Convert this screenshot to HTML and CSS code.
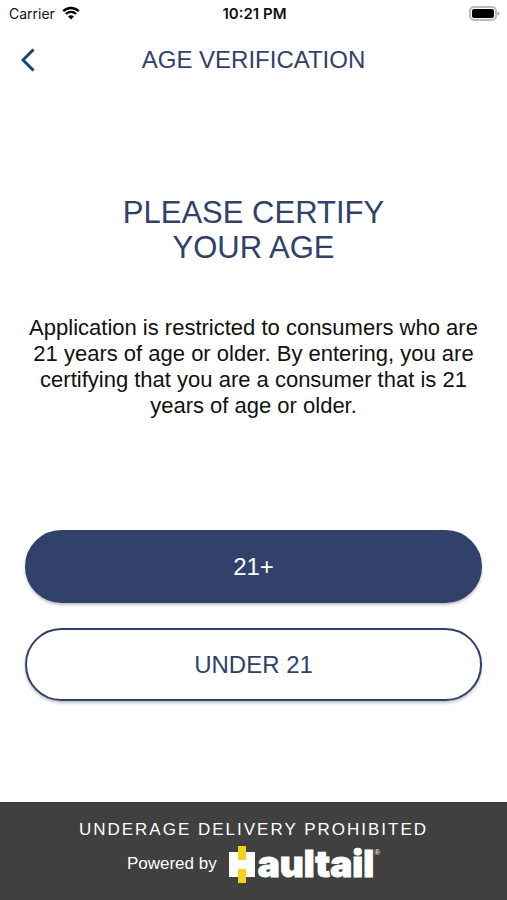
FILE: index.html
```html
<!DOCTYPE html>
<html lang="en">
<head>
  <meta charset="utf-8">
  <meta name="viewport" content="width=device-width, initial-scale=1">
  <title>Age Verification</title>
  <link rel="stylesheet" href="styles.css">
</head>
<body>
  <div class="status-bar">
    <div class="carrier">
      <span>Carrier</span>
      <svg class="wifi" viewBox="0 0 18 14" aria-hidden="true">
        <path d="M1.2 5.1a11.2 11.2 0 0 1 15.6 0" />
        <path d="M3.9 8a7.3 7.3 0 0 1 10.2 0" />
        <path class="wifi-dot" d="M9 13.6 6 10.6a4.3 4.3 0 0 1 6 0z" />
      </svg>
    </div>
    <time class="clock">10:21 PM</time>
    <svg class="battery" viewBox="0 0 31 15" aria-hidden="true">
      <rect class="battery-case" x="1" y="1" width="26" height="13" rx="4" />
      <rect x="3" y="3" width="22" height="9" rx="2" />
      <path class="battery-tip" d="M28.5 5.2q2 .8 2 2.3t-2 2.3z" />
    </svg>
  </div>

  <header class="nav-bar">
    <button class="back" type="button" aria-label="Back">
      <svg viewBox="0 0 14 24" aria-hidden="true"><path d="M12.5 1.5 2 12l10.5 10.5" /></svg>
    </button>
    <h1 class="nav-title">AGE VERIFICATION</h1>
  </header>

  <main class="content">
    <h2 class="heading">PLEASE CERTIFY<br>YOUR AGE</h2>
    <p class="notice">Application is restricted to consumers who are 21 years of age or older. By entering, you are certifying that you are a consumer that is 21 years of age or older.</p>
    <div class="actions">
      <button class="button button-primary" type="button">21+</button>
      <button class="button button-outline" type="button">UNDER 21</button>
    </div>
  </main>

  <footer class="footer">
    <p class="warning">UNDERAGE DELIVERY PROHIBITED</p>
    <div class="powered">
      <span>Powered by</span>
      <span class="brand">
        <svg class="brand-mark" viewBox="0 0 26 37" role="img" aria-label="H">
          <rect class="mark-white" x="0" y="6" width="9" height="25" />
          <rect class="mark-white" x="17" y="6" width="9" height="25" />
          <rect class="mark-white" x="8" y="14" width="10" height="9" />
          <rect class="mark-yellow" x="9" y="0" width="8" height="14" />
          <rect class="mark-yellow" x="9" y="23" width="8" height="14" />
        </svg>
        <span class="brand-name">aultail</span>
        <span class="registered">®</span>
      </span>
    </div>
  </footer>
</body>
</html>
```

FILE: styles.css
```css
:root {
  --navy: #314169;
  --charcoal: #404040;
  --yellow: #f2d41b;
}

* {
  box-sizing: border-box;
}

body {
  display: flex;
  flex-direction: column;
  min-height: 100vh;
  margin: 0;
  background: #fff;
  color: #111;
  font-family: "Liberation Sans", Arial, sans-serif;
}

h1,
h2,
p {
  margin: 0;
  font-weight: 400;
}

.status-bar {
  display: grid;
  grid-template-columns: 1fr auto 1fr;
  align-items: center;
  height: 27px;
  padding: 0 7px 0 9px;
  font: 14px/20px Inter, sans-serif;
}

.carrier {
  display: flex;
  align-items: center;
  gap: 7px;
}

.wifi {
  width: 18px;
  height: 14px;
  margin-bottom: 2px;
  fill: none;
  stroke: #000;
  stroke-width: 2.4;
}

.wifi .wifi-dot {
  fill: #000;
  stroke: none;
}

.clock {
  font-size: 15px;
  font-weight: 600;
}

.battery {
  justify-self: end;
  width: 31px;
  height: 15px;
}

.battery-case {
  fill: #fff;
  stroke: #bbb;
  stroke-width: 2;
}

.battery-tip {
  fill: #aaa;
}

.nav-bar {
  display: grid;
  grid-template-columns: 56px 1fr 56px;
  align-items: center;
  height: 65px;
}

.back {
  height: 44px;
  padding: 0 0 0 21px;
  border: 0;
  background: none;
}

.back svg {
  display: block;
  width: 14px;
  height: 24px;
  fill: none;
  stroke: #1d4275;
  stroke-width: 3;
}

.nav-title {
  color: var(--navy);
  font-size: 24px;
  line-height: 32px;
  text-align: center;
}

.content {
  flex: 1;
  padding: 103px 25px 0;
}

.heading {
  color: var(--navy);
  font-size: 31px;
  line-height: 35px;
  text-align: center;
}

.notice {
  margin-top: 50px;
  font-size: 22px;
  line-height: 26px;
  text-align: center;
}

.actions {
  display: grid;
  gap: 25px;
  margin-top: 111px;
}

.button {
  height: 73px;
  border: 2px solid var(--navy);
  border-radius: 37px;
  box-shadow: 0 2px 3px rgb(0 0 0 / 25%);
  font: 24px/30px "Liberation Sans", Arial, sans-serif;
}

.button-primary {
  background: var(--navy);
  color: #fff;
}

.button-outline {
  background: #fff;
  color: var(--navy);
}

.footer {
  padding: 18px 16px 17px;
  background: var(--charcoal);
  color: #fff;
  text-align: center;
}

.warning {
  font-size: 17px;
  line-height: 20px;
  letter-spacing: 2px;
}

.powered {
  display: flex;
  align-items: center;
  justify-content: center;
  gap: 12px;
  height: 38px;
  margin-top: 5px;
  font-size: 17px;
}

.brand {
  display: flex;
  align-items: center;
}

.brand-mark {
  width: 26px;
  height: 37px;
}

.mark-white {
  fill: #fff;
}

.mark-yellow {
  fill: var(--yellow);
}

.brand-name {
  margin-left: 3px;
  font: 900 37px/36px Inter, sans-serif;
  -webkit-text-stroke: 1px #fff;
}

.registered {
  align-self: flex-start;
  font-size: 8px;
  line-height: 14px;
}
```
